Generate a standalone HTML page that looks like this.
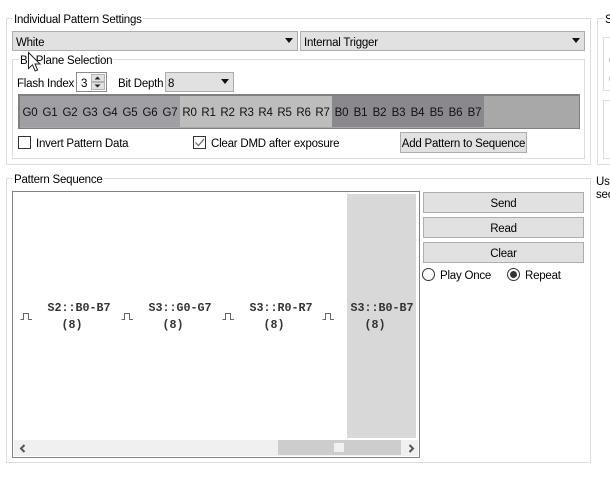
<!DOCTYPE html>
<html><head><meta charset="utf-8">
<style>
html,body{margin:0;padding:0;background:#fff}
#r{position:relative;width:610px;height:477px;overflow:hidden;background:#fff;font-family:"Liberation Sans",sans-serif;font-size:11.5px;letter-spacing:-0.22px;color:#000}
#r div{position:absolute;box-sizing:border-box}
.t{white-space:nowrap;line-height:14px;height:14px;margin-top:1px}
.g{border:1px solid #dcdcdc}
.b{background:#e1e1e1;border:1px solid #adadad}
.bt{text-align:center;line-height:22px;white-space:nowrap}
.w{background:#fff;padding:0 1px}
.seg{top:96px;height:31px;line-height:34px;white-space:nowrap;color:#111}
.seg span{position:absolute;top:0;transform:translateX(-50%)}
.m{font-family:"Liberation Mono",monospace;font-weight:bold;font-size:11.67px;letter-spacing:0;line-height:17px;text-align:center;white-space:pre;color:#333}
.m span{position:relative;left:-7px}
svg{position:absolute;overflow:visible}
</style></head><body><div id="r">

<div class="g" style="left:6px;top:18px;width:585px;height:147px"></div>
<div class="t w" style="left:13px;top:12px">Individual Pattern Settings</div>

<div class="b" style="left:12px;top:31px;width:286px;height:20px"></div>
<div class="t" style="left:16px;top:35px">White</div>
<svg style="left:285px;top:38px" width="10" height="6"><path d="M0 0H8L4 5Z" fill="#111"/></svg>
<div class="b" style="left:300px;top:31px;width:285px;height:20px"></div>
<div class="t" style="left:304px;top:35px">Internal Trigger</div>
<svg style="left:572px;top:38px" width="10" height="6"><path d="M0 0H8L4 5Z" fill="#111"/></svg>

<div class="g" style="left:12px;top:59px;width:573px;height:100px"></div>
<div class="t w" style="left:19px;top:53px">Bit Plane Selection</div>

<div class="t" style="left:17px;top:76px">Flash Index</div>
<div style="left:76px;top:72px;width:31px;height:20px;border:1px solid #8a8a8a;background:#fff"></div>
<div class="t" style="left:81px;top:76px">3</div>
<div style="left:91px;top:74px;width:14px;height:8px;background:#e1e1e1;border:1px solid #b4b4b4"></div>
<div style="left:91px;top:82px;width:14px;height:8px;background:#e1e1e1;border:1px solid #b4b4b4"></div>
<svg style="left:94px;top:76px" width="8" height="13"><path d="M0.5 3.5L3.5 0.5L6.5 3.5ZM0.5 8.5H6.5L3.5 11.5Z" fill="#222"/></svg>
<div class="t" style="left:118px;top:76px">Bit Depth</div>
<div class="b" style="left:165px;top:72px;width:69px;height:20px"></div>
<div class="t" style="left:168px;top:76px">8</div>
<svg style="left:221px;top:79px" width="10" height="6"><path d="M0 0H8L4 5Z" fill="#111"/></svg>

<div style="left:18px;top:94px;width:562px;height:35px;background:#a8a8a8;border:1px solid #808080;border-width:2px 1px 1px 2px"></div>
<div class="seg" style="left:20px;width:160px;background:#a09fa4">
<span style="left:10px">G0</span><span style="left:30px">G1</span><span style="left:50px">G2</span><span style="left:70px">G3</span><span style="left:90px">G4</span><span style="left:110px">G5</span><span style="left:130px">G6</span><span style="left:150px">G7</span></div>
<div class="seg" style="left:180px;width:152px;background:#bdbdbd">
<span style="left:9.5px">R0</span><span style="left:28.5px">R1</span><span style="left:47.5px">R2</span><span style="left:66.5px">R3</span><span style="left:85.5px">R4</span><span style="left:104.5px">R5</span><span style="left:123.5px">R6</span><span style="left:142.5px">R7</span></div>
<div class="seg" style="left:332px;width:152px;background:#8a888d">
<span style="left:9.5px">B0</span><span style="left:28.5px">B1</span><span style="left:47.5px">B2</span><span style="left:66.5px">B3</span><span style="left:85.5px">B4</span><span style="left:104.5px">B5</span><span style="left:123.5px">B6</span><span style="left:142.5px">B7</span></div>

<div style="left:18px;top:136px;width:13px;height:13px;border:1px solid #333;background:#fff"></div>
<div class="t" style="left:36px;top:136px">Invert Pattern Data</div>
<div style="left:193px;top:136px;width:13px;height:13px;border:1px solid #333;background:#fff"></div>
<svg style="left:193px;top:136px" width="13" height="13"><path d="M2.5 6.5L5.5 9.5L11 3" fill="none" stroke="#666" stroke-width="1.2"/></svg>
<div class="t" style="left:211px;top:136px">Clear DMD after exposure</div>
<div class="b bt" style="left:400px;top:132px;width:127px;height:21px">Add Pattern to Sequence</div>

<!-- right edge -->
<div class="g" style="left:597px;top:18px;width:30px;height:147px"></div>
<div class="t w" style="left:604px;top:12px">S</div>
<div class="g" style="left:603px;top:37px;width:20px;height:54px"></div>
<div class="g" style="left:603px;top:100px;width:20px;height:59px"></div>
<div class="t" style="left:609px;top:52px">(</div>
<div class="t" style="left:609px;top:71px">(</div>
<div class="t" style="left:609px;top:117px;color:#334">I</div>
<div class="t" style="left:609px;top:139px;color:#334">I</div>
<div class="t" style="left:596px;top:174px">Use</div>
<div class="t" style="left:596px;top:187px">sec</div>

<div class="g" style="left:6px;top:178px;width:585px;height:285px"></div>
<div class="t w" style="left:13px;top:172px">Pattern Sequence</div>

<div style="left:12px;top:191px;width:408px;height:267px;border:1px solid #828282;background:#fff"></div>
<div style="left:347px;top:194px;width:69px;height:244px;background:#d8d8d8"></div>

<svg style="left:20px;top:312px" width="14" height="9"><path d="M0.5 7.5H3.5V1.5H8.5V7.5H12" fill="none" stroke="#666"/></svg>
<svg style="left:121px;top:312px" width="14" height="9"><path d="M0.5 7.5H3.5V1.5H8.5V7.5H12" fill="none" stroke="#666"/></svg>
<svg style="left:222px;top:312px" width="14" height="9"><path d="M0.5 7.5H3.5V1.5H8.5V7.5H12" fill="none" stroke="#666"/></svg>
<svg style="left:322px;top:312px" width="14" height="9"><path d="M0.5 7.5H3.5V1.5H8.5V7.5H12" fill="none" stroke="#666"/></svg>
<div class="m" style="left:39px;top:300px;width:80px">S2::B0-B7
<span>(8)</span></div>
<div class="m" style="left:140px;top:300px;width:80px">S3::G0-G7
<span>(8)</span></div>
<div class="m" style="left:241px;top:300px;width:80px">S3::R0-R7
<span>(8)</span></div>
<div class="m" style="left:342px;top:300px;width:80px">S3::B0-B7
<span>(8)</span></div>

<div style="left:14px;top:440px;width:404px;height:16px;background:#f0f0f0"></div>
<div style="left:278px;top:440px;width:123px;height:15px;background:#cdcdcd"></div>
<div style="left:334px;top:443px;width:10px;height:9px;background:#f0f0f0"></div>
<svg style="left:19px;top:444px" width="8" height="9"><path d="M5.5 1L2 4.5L5.5 8" fill="none" stroke="#555" stroke-width="2"/></svg>
<svg style="left:407px;top:444px" width="8" height="9"><path d="M2.5 1L6 4.5L2.5 8" fill="none" stroke="#555" stroke-width="2"/></svg>

<div class="b bt" style="left:423px;top:192px;width:161px;height:21px">Send</div>
<div class="b bt" style="left:423px;top:217px;width:161px;height:21px">Read</div>
<div class="b bt" style="left:423px;top:242px;width:161px;height:21px">Clear</div>

<svg style="left:422px;top:268px" width="13" height="13"><circle cx="6.5" cy="6.5" r="6" fill="#fff" stroke="#333"/></svg>
<div class="t" style="left:440px;top:268px">Play Once</div>
<svg style="left:507px;top:268px" width="13" height="13"><circle cx="6.5" cy="6.5" r="6" fill="#fff" stroke="#333"/><circle cx="6.5" cy="6.5" r="3.5" fill="#333"/></svg>
<div class="t" style="left:525px;top:268px">Repeat</div>

<svg style="left:28px;top:52px" width="13" height="21"><path d="M0.5 0.5V16.5L4.5 12.8L7.2 19L9.6 18L7 12H12Z" fill="#fff" stroke="#222" stroke-width="1"/></svg>
</div></body></html>
